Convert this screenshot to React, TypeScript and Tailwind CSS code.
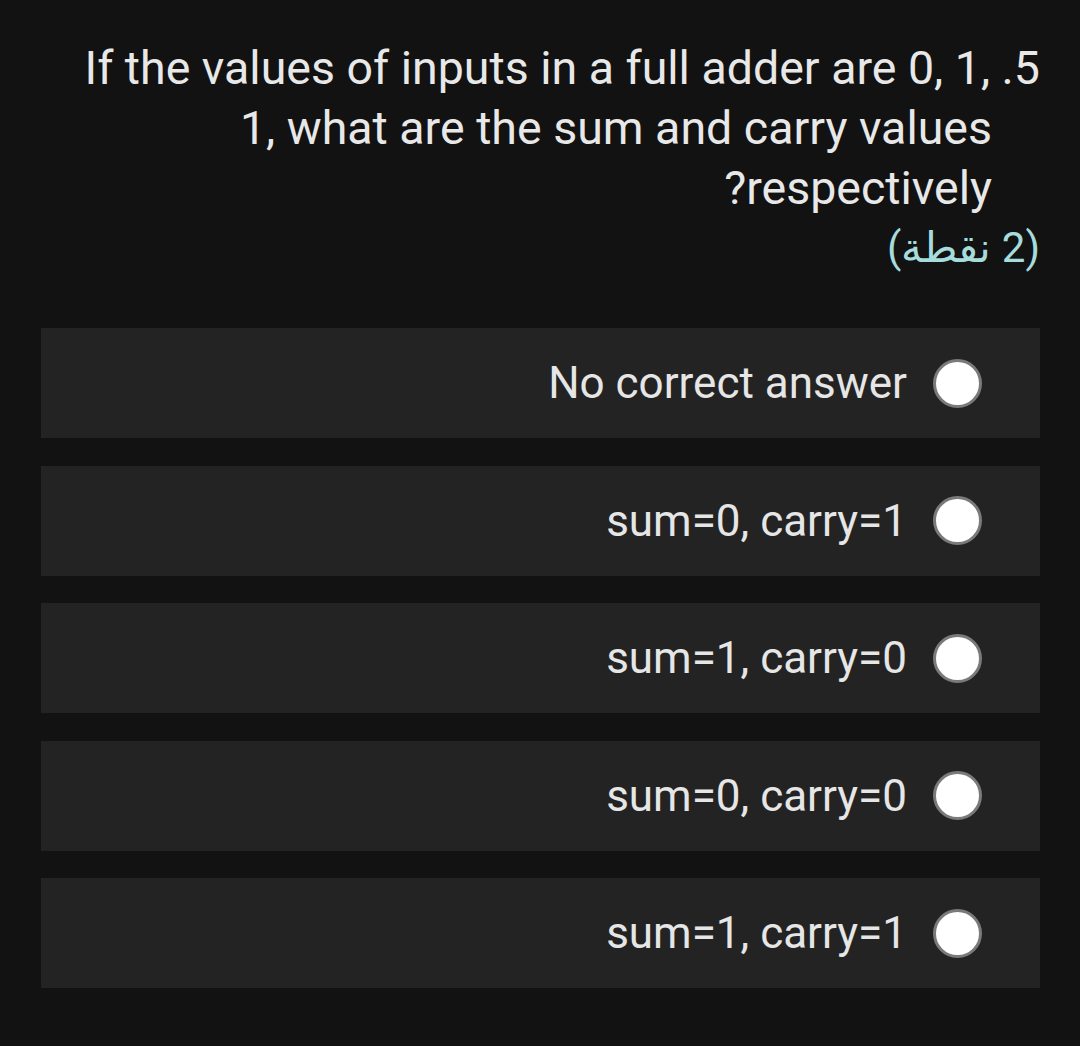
import React from "react";

const options = [
  "No correct answer",
  "sum=0, carry=1",
  "sum=1, carry=0",
  "sum=0, carry=0",
  "sum=1, carry=1",
];

export default function App() {
  return (
    <div
      className="w-[1080px] h-[1046px] bg-[#121212] text-[#e8e8e8] overflow-hidden"
      style={{ fontFamily: "Roboto, 'Noto Sans', sans-serif" }}
    >
      <div className="pt-[38px] text-right text-[46.5px] leading-[60px]">
        <div className="pr-[40px] whitespace-nowrap">If the values of inputs in a full adder are 0, 1, .5</div>
        <div className="pr-[88px] whitespace-nowrap">1, what are the sum and carry values</div>
        <div className="pr-[88px] whitespace-nowrap">?respectively</div>
        <div className="pr-[40px] text-[42px] text-[#a6dcdc]" dir="rtl">
          (2 نقطة)
        </div>
      </div>
      <div className="mt-[50px] flex flex-col gap-[27.5px] pl-[41px] pr-[40px]">
        {options.map((o) => (
          <div
            key={o}
            className="h-[110px] bg-[#232323] flex items-center justify-end pr-[58px]"
          >
            <span className="text-[44px] text-[#e6e6e6] whitespace-nowrap">{o}</span>
            <span className="ml-[26px] w-[49px] h-[49px] rounded-full bg-white border-[3px] border-[#7a7a7a] shrink-0" />
          </div>
        ))}
      </div>
    </div>
  );
}
